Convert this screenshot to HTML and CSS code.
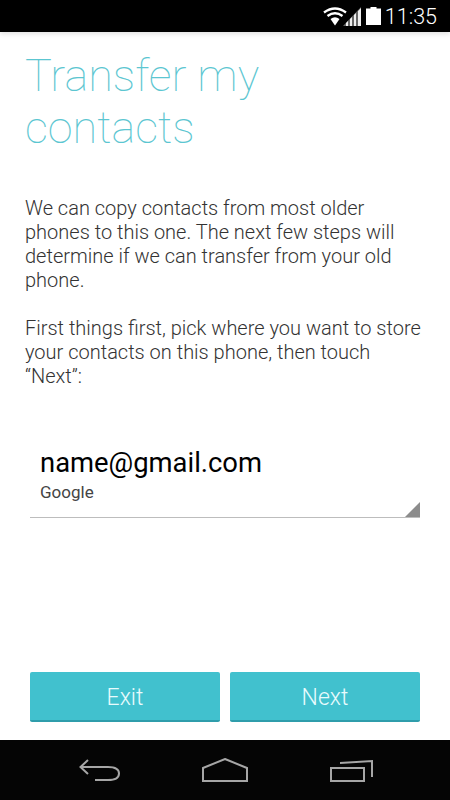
FILE: index.html
```html
<!DOCTYPE html>
<html>

<head>
    <meta charset='UTF-8'>
    <title>Transfer my contacts</title>
    <link rel="stylesheet" href="styles.css">
</head>

<body>
    <div class='status-bar'>
        <svg class='status-wifi' width='24' height='19' viewBox='0 0 24 19'>
            <path d='M1 5.500 Q12 -2.500 23 5.500' fill='none' stroke='#fff' stroke-width='2.400'/>
            <path d='M4.500 9 Q12 3.500 19.500 9' fill='none' stroke='#fff' stroke-width='2.400'/>
            <path d='M7.500 12 Q12 8.500 16.500 12 L12 18.500 Z' fill='#fff'/>
        </svg>
        <svg class='status-signal' width='18' height='19' viewBox='0 0 18 19'>
            <path d='M0 19 L18 0 V19 Z' fill='#666'/>
            <path d='M3 19 V16 L5 14 V19 Z M7 19 V12 L9 10 V19 Z M11 19 V8 L13 6 V19 Z M15 19 V4 L18 1 V19 Z' fill='#eee'/>
        </svg>
        <svg class='status-battery' width='15' height='18' viewBox='0 0 15 18'>
            <path d='M4.500 0 H10.500 V1.500 H15 V18 H0 V1.500 H4.500 Z' fill='#fff'/>
        </svg>
        <span class='status-time'>11:35</span>
    </div>

    <div class='content'>
        <h1 class='title'>Transfer my contacts</h1>

        <p class='description'>We can copy contacts from most older phones to this one. The next few steps will determine if we can transfer from your old phone.</p>
        <p class='description'>First things first, pick where you want to store your contacts on this phone, then touch “Next”:</p>

        <div class='account-select'>
            <div class='account-name'>name@gmail.com</div>
            <div class='account-type'>Google</div>
        </div>

        <div class='button-row'>
            <button class='action-button'>Exit</button>
            <button class='action-button'>Next</button>
        </div>
    </div>

    <div class='nav-bar'>
        <svg width='42' height='24' viewBox='0 0 42 24'>
            <path d='M9 2 L1.500 9 L9 16 M1.500 9 H29 Q40 9 40 15.500 Q40 22 29 22 H16' fill='none' stroke='#a6a6a6' stroke-width='2'/>
        </svg>
        <svg width='46' height='24' viewBox='0 0 46 24'>
            <path d='M23 1 L45 10 V23 H1 V10 Z' fill='none' stroke='#a6a6a6' stroke-width='2'/>
        </svg>
        <svg width='44' height='24' viewBox='0 0 44 24'>
            <path d='M2 10 H35 V23 H2 Z M11 5 L43 3 V19' fill='none' stroke='#a6a6a6' stroke-width='2'/>
        </svg>
    </div>
</body>

</html>
```

FILE: styles.css
```css
body {
    font-family: Roboto, sans-serif;
    margin: 0;
    width: 450px;
    height: 800px;
    background-color: #ffffff;
    display: flex;
    flex-direction: column;
    overflow: hidden;
}

.status-bar {
    height: 32px;
    flex-shrink: 0;
    background-color: #000000;
    display: flex;
    align-items: center;
    justify-content: flex-end;
    padding-right: 13px;
    box-shadow: 0 2px 5px rgba(0, 0, 0, 0.12);
}

.status-wifi {
    margin-right: -4px;
}

.status-battery {
    margin: 0 4px 0 5px;
}

.status-time {
    color: #ffffff;
    font-size: 21.500px;
    font-weight: 300;
}

.content {
    flex: 1;
    display: flex;
    flex-direction: column;
    padding: 0 30px 18px;
}

.title {
    font-size: 45px;
    font-weight: 100;
    line-height: 52px;
    color: #5cc6d1;
    margin: 18px 0 42px -5px;
}

.description {
    font-size: 20px;
    font-weight: 300;
    line-height: 24px;
    color: #333333;
    margin: 0 0 24px -5px;
    width: 400px;
}

.account-select {
    margin-top: 34px;
    padding: 0 0 13px 10px;
    border-bottom: 1px solid #bdbdbd;
    position: relative;
}

.account-select::after {
    content: '';
    position: absolute;
    right: 0;
    bottom: 0;
    border-style: solid;
    border-width: 0 0 15px 15px;
    border-color: transparent transparent #8c8c8c transparent;
}

.account-name {
    font-size: 27.400px;
    line-height: 34px;
    color: #000000;
}

.account-type {
    font-size: 17px;
    line-height: 24px;
    color: #444444;
}

.button-row {
    display: flex;
    gap: 10px;
    margin-top: auto;
}

.action-button {
    flex: 1;
    height: 50px;
    padding-top: 4px;
    background-color: #41c1ce;
    color: #e8fbfd;
    border: none;
    border-bottom: 2px solid #2f9dab;
    border-radius: 2px;
    font-family: Roboto, sans-serif;
    font-size: 23px;
    font-weight: 300;
}

.nav-bar {
    height: 60px;
    flex-shrink: 0;
    background-color: #050505;
    display: flex;
    align-items: center;
    justify-content: space-between;
    padding: 0 77px 0 79px;
    box-sizing: border-box;
}
```
